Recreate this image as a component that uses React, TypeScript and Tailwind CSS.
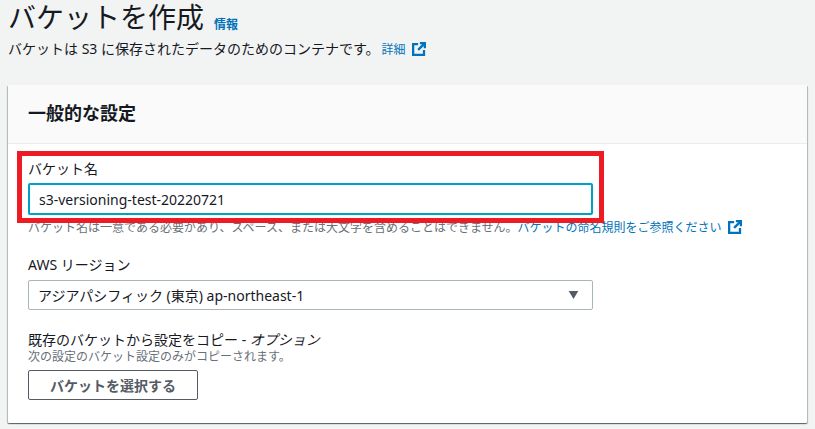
const fontStack = "font-['Noto_Sans','Noto_Sans_CJK_JP',sans-serif]";

function ExternalIcon() {
  return (
    <svg viewBox="0 0 16 16" className="inline-block h-[14px] w-[14px] align-[-2px]" fill="none" stroke="#0073bb" strokeWidth="2.6" aria-hidden>
      <path d="M7 2.3H1.3v12.4h12.4V9" />
      <path d="M9 1.3h5.7V7" />
      <path d="M14.7 1.3 7 9" />
    </svg>
  );
}

export default function App() {
  return (
    <div className={`${fontStack} h-[429px] w-[815px] overflow-hidden bg-[#f2f3f3] text-[14px] text-[#16191f]`}>
      <div className="px-[8px]">
        <div className="flex h-[38px] items-start">
          <h1 className="text-[28px] leading-[34px] font-normal">バケットを作成</h1>
          <a className="mt-[16px] ml-[10px] text-[12px] leading-[18px] font-bold text-[#0073bb]">情報</a>
        </div>
        <p className="mt-[1px] h-[20px] leading-[20px]">
          バケットは S3 に保存されたデータのためのコンテナです。
          <a className="ml-[2px] text-[12px] text-[#0073bb]">詳細<span className="ml-[6px]"><ExternalIcon /></span></a>
        </p>

        <section className="mt-[26px] h-[338px] rounded-[1px] bg-white shadow-[0_1px_1px_0_rgba(0,28,36,0.4),1px_1px_1px_0_rgba(0,28,36,0.25),-1px_1px_1px_0_rgba(0,28,36,0.25)]">
          <div className="flex h-[59px] items-center border-b border-[#eaeded] bg-[#fafafa] px-[20px] pb-[2px]">
            <h2 className="text-[18px] font-bold">一般的な設定</h2>
          </div>
          <div className="relative px-[20px] pt-[15px]">
            <div className="pointer-events-none absolute top-[7px] left-[9px] h-[72px] w-[587px] border-[5px] border-[#ed1c24]" />
            <label className="block h-[20px] leading-[20px]">バケット名</label>
            <div className="mt-[4px] flex h-[32px] w-[565px] items-center rounded-[2px] border-2 border-[#00a1c9] px-[9px] text-[14px]">
              s3-versioning-test-20220721
            </div>
            <p className="mt-[5px] h-[16px] text-[12px] leading-[16px] text-[#687078]">
              バケット名は一意である必要があり、スペース、または大文字を含めることはできません。
              <a className="text-[#0073bb]">バケットの命名規則をご参照ください<span className="ml-[6px]"><ExternalIcon /></span></a>
            </p>
            <label className="mt-[19px] block h-[20px] leading-[20px]">AWS リージョン</label>
            <div className="mt-[5px] flex h-[30px] w-[565px] items-center justify-between rounded-[2px] border border-[#aab7b8] pr-[13px] pl-[10px]">
              <span className="-ml-[1px]">アジアパシフィック (東京) ap-northeast-1</span>
              <svg viewBox="0 0 12 10" className="h-[8px] w-[11px]" aria-hidden>
                <path d="M0 0h12L6 10z" fill="#545b64" />
              </svg>
            </div>
            <label className="mt-[21px] block h-[18px] leading-[18px]">
              既存のバケットから設定をコピー - <i>オプション</i>
            </label>
            <p className="h-[16px] text-[12px] leading-[16px] text-[#687078]">次の設定のバケット設定のみがコピーされます。</p>
            <button className="mt-[5px] h-[30px] w-[170px] rounded-[2px] border border-[#545b64] bg-white text-[14px] font-bold text-[#545b64]">
              バケットを選択する
            </button>
          </div>
        </section>
      </div>
    </div>
  );
}
